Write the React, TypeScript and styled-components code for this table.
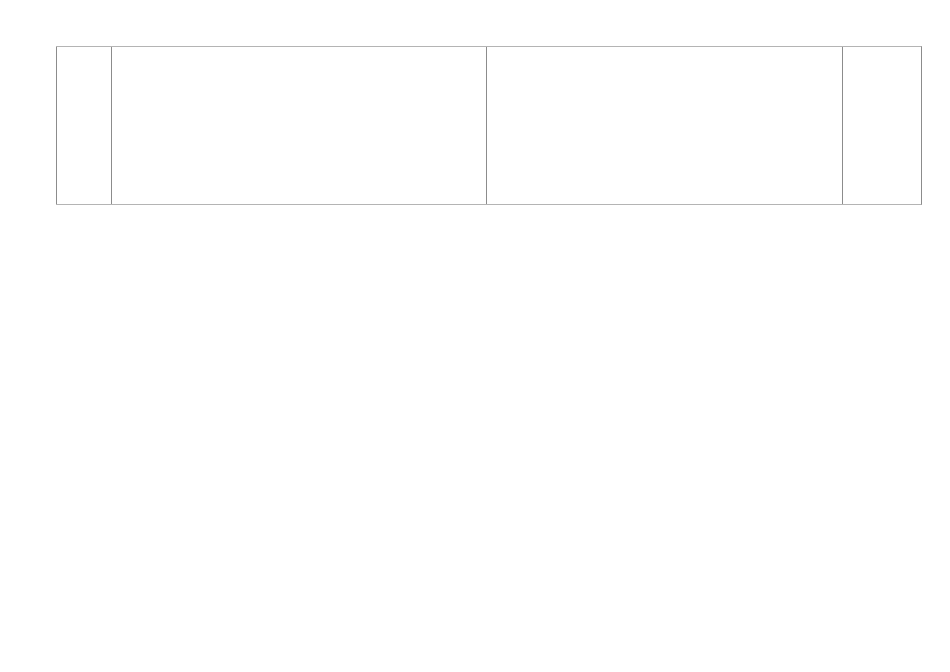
import React from "react";
import styled, { createGlobalStyle } from "styled-components";

const Global = createGlobalStyle`
  body {
    margin: 0;
    background: #fff;
    font-family: "Liberation Sans", Arial, sans-serif;
  }
`;

const Page = styled.div`
  padding: 46px 0 0 56px;
`;

const Row = styled.div`
  display: grid;
  grid-template-columns: 55px 375px 356px 79px;
  width: 866px;
  height: 159px;
  box-sizing: border-box;
  border-top: 1px solid #b4b4b4;
  border-bottom: 1px solid #b4b4b4;
  border-right: 1px solid #8c8c8c;
`;

const Cell = styled.div`
  border-left: 1px solid #8c8c8c;
`;

const App = () => {
  return (
    <Page>
      <Global />
      <Row>
        <Cell />
        <Cell />
        <Cell />
        <Cell />
      </Row>
    </Page>
  );
};

export default App;
